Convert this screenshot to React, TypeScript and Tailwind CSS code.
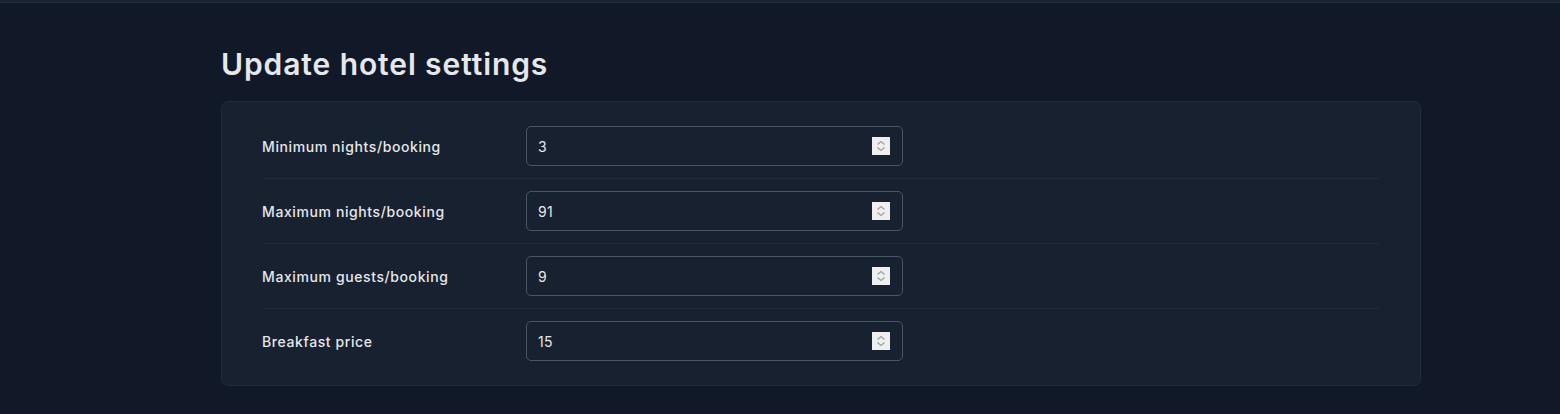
const settings = [
  { id: "minNights", label: "Minimum nights/booking", value: "3" },
  { id: "maxNights", label: "Maximum nights/booking", value: "91" },
  { id: "maxGuests", label: "Maximum guests/booking", value: "9" },
  { id: "breakfastPrice", label: "Breakfast price", value: "15" },
];

function Spinner() {
  return (
    <div className="h-[18px] w-[18px] bg-[#efefef]">
      <svg width="18" height="18" viewBox="0 0 18 18" fill="none">
        <path d="M5.5 7.5L9 4.5L12.5 7.5" stroke="#9ca0a8" strokeWidth="1.3" />
        <path d="M5.5 10.5L9 13.5L12.5 10.5" stroke="#9ca0a8" strokeWidth="1.3" />
      </svg>
    </div>
  );
}

function NumberField({ id, value }: { id: string; value: string }) {
  return (
    <div className="flex h-10 w-[377px] items-center rounded-[5px] border border-[#4b5563] bg-[#18212f] pl-[11px] pr-3">
      <input
        id={id}
        type="text"
        defaultValue={value}
        className="min-w-0 flex-1 bg-transparent text-[14px] tracking-[0.4px] text-[#e5e7eb] outline-none"
      />
      <Spinner />
    </div>
  );
}

export default function App() {
  return (
    <div
      className="min-h-[414px] bg-[#111827] text-[#e5e7eb]"
      style={{ fontFamily: "Inter, 'Noto Sans', sans-serif" }}
    >
      <div className="h-[3px] border-b border-[#243041] bg-[#1b2331]" />

      <main className="pl-[221px] pt-[43px]">
        <h1 className="mb-[19px] text-[30px] font-semibold leading-[36px] tracking-[0.9px] text-[#e5e7eb]">
          Update hotel settings
        </h1>

        <form className="w-[1200px] rounded-[7px] border border-[#222b3a] bg-[#18212f] px-10 py-3">
          {settings.map((s, i) => (
            <div
              key={s.id}
              className={`flex items-center py-3 ${
                i < settings.length - 1 ? "border-b border-[#1f2937]" : ""
              }`}
            >
              <label
                htmlFor={s.id}
                className="w-[264px] text-[14px] font-medium tracking-[0.6px] text-[#e5e7eb]"
              >
                {s.label}
              </label>
              <NumberField id={s.id} value={s.value} />
            </div>
          ))}
        </form>
      </main>
    </div>
  );
}
